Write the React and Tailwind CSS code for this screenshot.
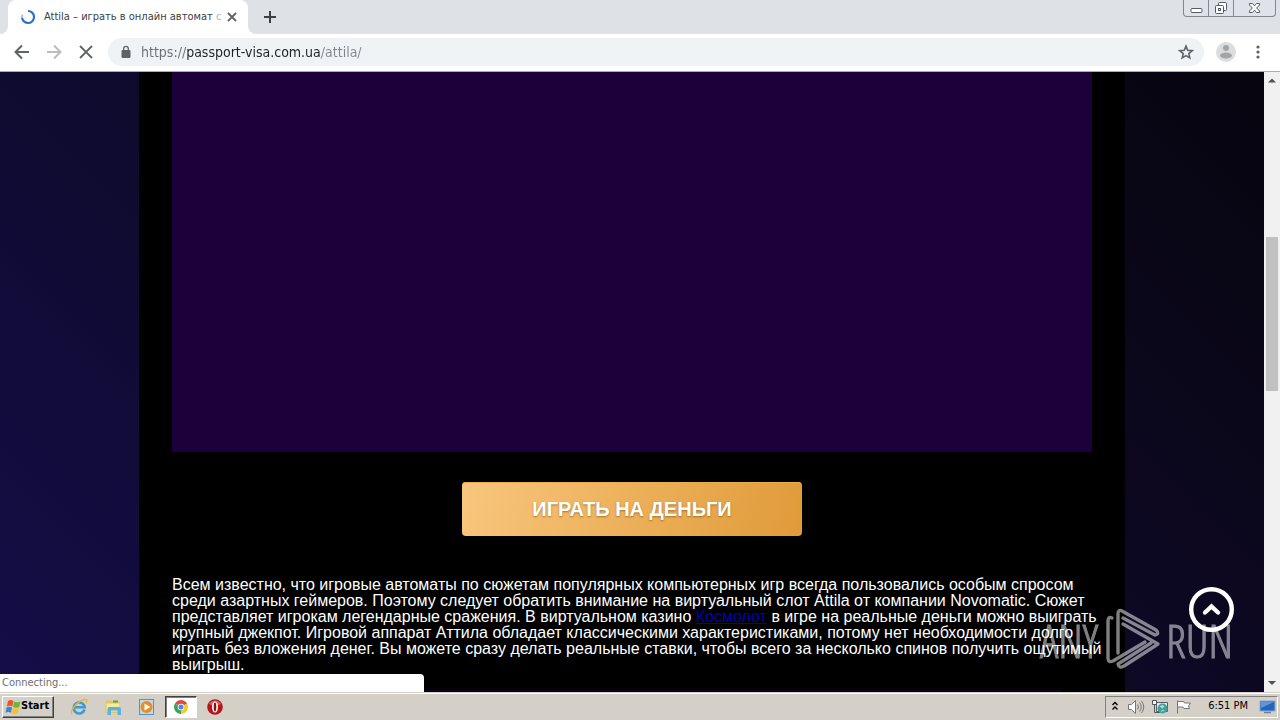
import React from "react";

const tahoma = "font-['DejaVu_Sans_Condensed','DejaVu_Sans',sans-serif]";
const iconButton = "flex h-7 w-7 shrink-0 items-center justify-center";

function TabStrip() {
  return (
    <header className="flex h-[34px] shrink-0 items-end justify-between bg-[#dee1e6] pl-2">
      <div className="flex h-full items-center">
        <div className="relative flex h-full w-60 items-center rounded-t-lg bg-white pr-2 pl-3" role="tab" aria-selected="true">
          <svg className="absolute bottom-0 -left-2" width="8" height="8" aria-hidden="true">
            <path d="M8 0v8H0a8 8 0 0 0 8-8z" fill="#fff" />
          </svg>
          <svg className="absolute -right-2 bottom-0" width="8" height="8" aria-hidden="true">
            <path d="M0 0v8h8a8 8 0 0 1-8-8z" fill="#fff" />
          </svg>
          <svg className="shrink-0" width="16" height="16" viewBox="0 0 16 16" fill="none" aria-hidden="true">
            <path d="M8 2a6 6 0 1 1-5.9 6.8" stroke="#2f6fd0" strokeWidth="2.200" />
            <path d="M2.1 8.8A6 6 0 0 1 2.6 5.6" stroke="#8fb4ee" strokeWidth="1.6" />
          </svg>
          <span className={`ml-2 flex-1 text-[11px] leading-4 whitespace-nowrap text-[#3c4043] ${tahoma}`}>
            Attila – играть в онлайн автомат <span className="text-[#b4b6b8]">с</span>
          </span>
          <button className="flex h-4 w-4 shrink-0 items-center justify-center" aria-label="Close tab">
            <svg width="10" height="10" viewBox="0 0 10 10" stroke="#5f6368" strokeWidth="1.8">
              <path d="M1 1l8 8M9 1l-8 8" />
            </svg>
          </button>
        </div>
        <button className="ml-2 flex h-7 w-7 items-center justify-center" aria-label="New tab">
          <svg width="12" height="12" viewBox="0 0 12 12" stroke="#3c4043" strokeWidth="2">
            <path d="M6 0v12M0 6h12" />
          </svg>
        </button>
      </div>
      <div className="mr-1 flex h-[17px] self-start rounded-b border border-t-0 border-[#83878e] bg-[#dfe2e8]">
        <button className="flex w-[25px] items-center justify-center border-r border-[#83878e]" aria-label="Minimize">
          <svg width="13" height="16" viewBox="0 0 13 16">
            <rect x="1" y="8.5" width="11" height="4" rx="1" fill="#fff" stroke="#555b66" />
          </svg>
        </button>
        <button className="flex w-[25px] items-center justify-center border-r border-[#83878e]" aria-label="Restore">
          <svg width="14" height="16" viewBox="0 0 14 16" fill="#fff" stroke="#555b66">
            <rect x="4.500" y="2.500" width="8" height="8" rx="1" />
            <rect x="1.500" y="5.500" width="8" height="8" rx="1" />
            <rect x="4.500" y="8.500" width="2" height="2" />
          </svg>
        </button>
        <button className="flex w-[41px] items-center justify-center" aria-label="Close">
          <svg width="13" height="16" viewBox="0 0 13 16">
            <path d="M1.500 3.500h3l2 2.400 2-2.400h3v1.500L8.600 8l2.900 3v1.500h-3l-2-2.400-2 2.400h-3V11l2.900-3-2.900-3z" fill="#fff" stroke="#555b66" />
          </svg>
        </button>
      </div>
    </header>
  );
}

function Toolbar() {
  return (
    <div className="flex h-[38px] shrink-0 items-center border-b border-[#a9abb0] bg-white px-2 pb-px">
      <button className={iconButton} aria-label="Back">
        <svg width="16" height="16" viewBox="0 0 16 16" fill="none" stroke="#5f6368" strokeWidth="2">
          <path d="M15 8H2M8 1.500L1.500 8 8 14.500" />
        </svg>
      </button>
      <button className={`ml-1 ${iconButton}`} aria-label="Forward">
        <svg width="16" height="16" viewBox="0 0 16 16" fill="none" stroke="#babcbe" strokeWidth="2">
          <path d="M1 8h13M8 1.500L14.500 8 8 14.500" />
        </svg>
      </button>
      <button className={`ml-1 ${iconButton}`} aria-label="Stop loading">
        <svg width="14" height="14" viewBox="0 0 14 14" stroke="#5f6368" strokeWidth="1.800">
          <path d="M1 1l12 12M13 1L1 13" />
        </svg>
      </button>
      <div className="ml-2 flex h-7 flex-1 items-center rounded-full bg-[#f0f3f6] pr-1 pl-3">
        <svg className="shrink-0" width="12" height="14" viewBox="0 0 12 14" aria-hidden="true">
          <rect x="1.500" y="5" width="9" height="8" rx="1" fill="#5f6368" />
          <path d="M3.700 5.500V3.600a2.300 2.300 0 0 1 4.600 0v1.900" fill="none" stroke="#5f6368" strokeWidth="1.300" />
        </svg>
        <input
          aria-label="Address"
          defaultValue="https://passport-visa.com.ua/attila/"
          className={`ml-[9px] h-6 flex-1 bg-[linear-gradient(to_right,#6b6f73_46px,#202124_46px,#202124_180px,#80868b_180px)] bg-clip-text text-[14px] text-transparent outline-none ${tahoma}`}
        />
        <button className={iconButton} aria-label="Bookmark this page">
          <svg width="16" height="16" viewBox="0 0 24 24" fill="none" stroke="#5f6368" strokeWidth="2.400" strokeLinejoin="miter">
            <path d="M12 3.200l2.600 6.200 6.700.6-5.100 4.400 1.500 6.500-5.700-3.400-5.700 3.400 1.500-6.500L2.700 10l6.700-.6z" />
          </svg>
        </button>
      </div>
      <button className={`ml-2 ${iconButton}`} aria-label="Profile">
        <svg width="20" height="20" viewBox="0 0 20 20">
          <circle cx="10" cy="10" r="10" fill="#dcddde" />
          <circle cx="10" cy="6" r="3" fill="#a2a4a6" />
          <ellipse cx="10" cy="13.500" rx="6" ry="3" fill="#a2a4a6" />
        </svg>
      </button>
      <button className={`ml-1 ${iconButton}`} aria-label="Menu">
        <svg width="4" height="16" viewBox="0 0 4 16" fill="#5f6368">
          <circle cx="2" cy="3" r="1.600" />
          <circle cx="2" cy="8" r="1.600" />
          <circle cx="2" cy="13" r="1.600" />
        </svg>
      </button>
    </div>
  );
}

function Watermark() {
  const word = "font-['Open_Sans_Condensed_Light','Noto_Sans_ExtraCondensed_Light','Roboto_Condensed_Light','Liberation_Sans_Narrow','Liberation_Sans',sans-serif] text-[46px] leading-none [-webkit-text-stroke:1px_#fff]";
  return (
    <div className="pointer-events-none absolute right-[47px] bottom-5 flex items-center text-white opacity-50">
      <span className={word}>ANY</span>
      <svg className="mr-1 ml-2" width="56" height="64" viewBox="0 0 56 64" fill="none" stroke="currentColor" strokeWidth="3.400" strokeLinejoin="round" strokeLinecap="round">
        <path d="M6 10Q2 8 2 13V50Q2 55 7 53L39 34M12 45V6Q12 1 16 3L50 22Q54 26 49 27L17 10M17 16L52 36 18 58Q13 61 12 56L45 35" />
      </svg>
      <span className={word}>RUN</span>
    </div>
  );
}

function Page() {
  return (
    <main className="relative flex min-h-0 flex-1">
      <div className="flex min-w-0 flex-1 justify-center overflow-hidden bg-[linear-gradient(45deg,#140d48,#0f0b30_33%,#0d0822_67%,#07050f)]">
        <article className="flex w-[78%] flex-col items-center bg-black px-[33px]">
          <div className="h-[380px] w-full shrink-0 bg-[#1d003a]" />
          <button className="mt-[30px] h-[54px] w-[340px] shrink-0 rounded bg-[linear-gradient(105deg,#f8c67e,#ecb05a_50%,#e09a39)] font-['Liberation_Sans',Arial,sans-serif] text-[20px] font-bold text-white [text-shadow:0_1px_2px_rgb(120_70_0/0.6)] shadow-[inset_0_1px_0_#e8b040]">
            ИГРАТЬ НА ДЕНЬГИ
          </button>
          <p className="mt-[41px] w-full font-['Liberation_Sans',Arial,sans-serif] text-[16px] leading-4 whitespace-nowrap text-white">
            Всем известно, что игровые автоматы по сюжетам популярных компьютерных игр всегда пользовались особым спросом
            <br />
            среди азартных геймеров. Поэтому следует обратить внимание на виртуальный слот Attila от компании Novomatic. Сюжет
            <br />
            представляет игрокам легендарные сражения. В виртуальном казино{" "}
            <a href="#kosmolot" className="text-[#0000b4] underline">Космолот</a> в игре на реальные деньги можно выиграть
            <br />
            крупный джекпот. Игровой аппарат Аттила обладает классическими характеристиками, потому нет необходимости долго
            <br />
            играть без вложения денег. Вы можете сразу делать реальные ставки, чтобы всего за несколько спинов получить ощутимый
            <br />
            выигрыш.
          </p>
          <div className="mt-[14px] h-8 w-[860px] max-w-full shrink-0 bg-[linear-gradient(#000,#1c0036_8px)]" />
        </article>
      </div>

      <div className="flex w-4 shrink-0 flex-col items-center bg-[#f1f1f1]" aria-hidden="true">
        <svg width="16" height="16" viewBox="0 0 16 16" fill="#505050"><path d="M4 10.500l4-4 4 4z" /></svg>
        <div className="mt-[149px] h-[154px] w-3 bg-[#c1c1c1]" />
        <svg className="mt-auto" width="16" height="16" viewBox="0 0 16 16" fill="#505050"><path d="M4 5l4 4 4-4z" /></svg>
      </div>

      <Watermark />
      <button className="absolute right-[46px] bottom-[60px]" aria-label="Наверх">
        <svg width="45" height="45" viewBox="0 0 45 45" fill="none" stroke="#fff">
          <circle cx="22.500" cy="22.500" r="20.300" strokeWidth="4.400" />
          <path d="M16 25.500l6.500-6 6.500 6" strokeWidth="4.400" strokeLinecap="round" strokeLinejoin="miter" />
        </svg>
      </button>
      <div className={`absolute bottom-0 left-0 h-[18px] w-[424px] rounded-tr bg-white pl-[2px] text-[11px] leading-[18px] text-[#6b6f73] ${tahoma}`}>
        Connecting...
      </div>
    </main>
  );
}

function Taskbar() {
  const item = "flex h-[22px] w-8 items-center justify-center";
  return (
    <footer className="flex h-7 shrink-0 items-center justify-between border-t border-[#d4d0c8] bg-[#d4d0c8] pr-[2px] pl-[2px] shadow-[inset_0_1px_0_#fff]">
      <div className="flex items-center gap-[2px]">
        <button className={`mr-[7px] flex h-[22px] w-[52px] items-center border border-t-white border-r-[#404040] border-b-[#404040] border-l-white pl-[2px] text-[11px] font-bold text-black shadow-[inset_-1px_-1px_0_#808080] ${tahoma}`}>
          <svg className="shrink-0" width="16" height="16" viewBox="0 0 16 16">
            <path d="M3 2q2.500-1.800 5.500 0L7.300 7.500q-2.500-1.500-5.500 0z" fill="#e8562a" />
            <path d="M9.200 2.500q2.800 1.500 6.300 0L14.300 8q-3 1.500-6.300 0z" fill="#6fb53a" />
            <path d="M1.600 8.500q2.500-1.500 5.500 0L6 13.800q-2.500-1.500-5.500 0z" fill="#3d83d6" />
            <path d="M7.800 8.900q2.800 1.500 6.300 0l-1.100 5.300q-3 1.500-6.300 0z" fill="#f4c22c" />
          </svg>
          <span>Start</span>
        </button>
        <button className={item} aria-label="Internet Explorer">
          <svg width="18" height="18" viewBox="0 0 18 18" fill="none">
            <path d="M14.500 11.500A5.500 5.500 0 1 1 14.700 9.300H5" stroke="#3b9ad9" strokeWidth="2.600" />
            <path d="M2 16C-.5 13 8 2 15.500 1.500c2 .2 1.500 2 .5 3.500" stroke="#e9b92d" strokeWidth="1.400" />
          </svg>
        </button>
        <button className={item} aria-label="Windows Explorer">
          <svg width="18" height="18" viewBox="0 0 18 18">
            <path d="M1.500 2.500h6l1 1.500h7.500V15H1.500z" fill="#e3c65e" />
            <path d="M2.500 5.500h13v8h-13z" fill="#f7e99e" />
            <path d="M3.500 17v-6q0-2 2-2H15q2 0 2 2v6h-3.500v-4.500H7V17z" fill="#5fb0dc" />
            <path d="M9 2.500h5v2H9z" fill="#57a946" />
          </svg>
        </button>
        <button className={item} aria-label="Media Player">
          <svg width="18" height="18" viewBox="0 0 18 18">
            <rect x="1.500" y="1.500" width="14" height="15" fill="#b9dcf5" stroke="#4b94cc" />
            <circle cx="8.500" cy="9" r="6" fill="#f08a1c" />
            <path d="M6.500 5.500v7l6-3.500z" fill="#fff" />
          </svg>
        </button>
        <button className="flex h-[22px] w-8 items-center justify-center border border-t-[#404040] border-r-white border-b-white border-l-[#404040] bg-white shadow-[inset_1px_1px_0_#808080]" aria-label="Google Chrome">
          <svg width="14" height="14" viewBox="0 0 14 14">
            <path d="M7 7L.94 3.500A7 7 0 0 1 13.060 3.500z" fill="#dd4b3e" />
            <path d="M7 7L13.060 3.500A7 7 0 0 1 7 14z" fill="#f6c92f" />
            <path d="M7 7v7A7 7 0 0 1 .94 3.500z" fill="#3fa15a" />
            <circle cx="7" cy="7" r="3.300" fill="#fff" />
            <circle cx="7" cy="7" r="2.500" fill="#4a86e8" />
          </svg>
        </button>
        <button className={item} aria-label="Opera">
          <svg width="16" height="16" viewBox="0 0 16 16">
            <circle cx="8" cy="8" r="7.800" fill="#b5161c" />
            <path d="M2 5a7 7 0 0 1 12 0q-6 3-12 0z" fill="#d9605f" />
            <ellipse cx="8" cy="8" rx="3" ry="5.500" fill="#fff" />
            <ellipse cx="8" cy="8" rx="1.300" ry="4.400" fill="#8e1015" />
          </svg>
        </button>
      </div>
      <div className={`flex h-[22px] items-center border border-t-[#808080] border-r-white border-b-white border-l-[#808080] pr-px pl-[5px] text-[11px] text-black ${tahoma}`}>
        <button aria-label="Show hidden icons">
          <svg width="8" height="12" viewBox="0 0 8 12" fill="none" stroke="#000" strokeWidth="1.400">
            <path d="M1.500 4L4 1.500 6.500 4M1.500 8.500L4 6l2.500 2.500" />
          </svg>
        </button>
        <button className="ml-[8px]" aria-label="Volume">
          <svg width="18" height="16" viewBox="0 0 18 16" fill="none" stroke="#77777a">
            <path d="M1.500 5.500h3l4-4v13l-4-4h-3z" fill="#fff" />
            <path d="M10.500 5.500q2 2.500 0 5M12.500 3.500q3.500 4.500 0 9M14.500 2q4.500 6 0 12" />
          </svg>
        </button>
        <button className="ml-[6px]" aria-label="Network">
          <svg width="18" height="16" viewBox="0 0 18 16">
            <path d="M5.500 3.500h11v9h-11z" fill="#e4e8ea" stroke="#5a6064" />
            <path d="M1.500 1.500h4v4h-4zM3.500 5.500v8h6" fill="none" stroke="#55585a" />
            <path d="M2 2h3v3H2z" fill="#fff" />
            <circle cx="11.500" cy="9.500" r="5" fill="#459e9b" />
            <path d="M8.500 7.500q3-3 5 0l-2 2zM10 13q0-3 4-2z" fill="#a7ddc9" />
          </svg>
        </button>
        <button className="ml-[6px]" aria-label="Action Center">
          <svg width="18" height="16" viewBox="0 0 18 16" fill="#fff" stroke="#77777a">
            <path d="M2.500 1.500v13M2.500 2.500h6l1 1.500h6l-2 3 1 2.500H9L8 8H2.500z" />
          </svg>
        </button>
        <time className="ml-[15px] whitespace-nowrap">6:51 PM</time>
        <button className="ml-[11px]" aria-label="Show desktop">
          <svg width="17" height="16" viewBox="0 0 17 16">
            <rect x="1" y="2" width="15" height="10" fill="#2665b8" stroke="#8babce" />
            <path d="M2 3h13L2 9z" fill="#5c96dd" />
            <path d="M5 13.500h7" stroke="#6a7f99" strokeWidth="1.500" />
          </svg>
        </button>
      </div>
    </footer>
  );
}

export default function App() {
  return (
    <div className="flex h-screen flex-col overflow-hidden">
      <TabStrip />
      <Toolbar />
      <Page />
      <Taskbar />
    </div>
  );
}
